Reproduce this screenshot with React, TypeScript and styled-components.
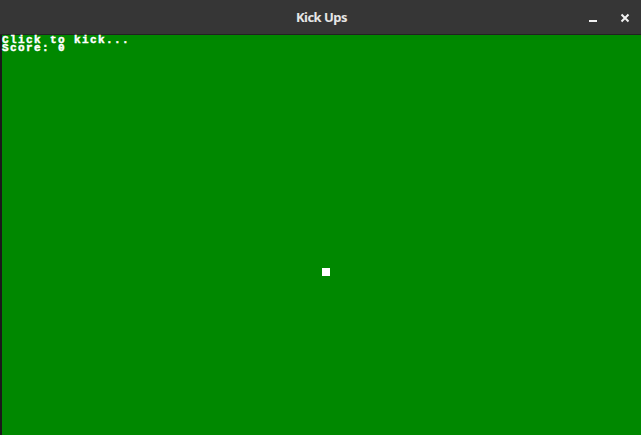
import React from "react";
import styled, { createGlobalStyle } from "styled-components";

const Global = createGlobalStyle`
  html, body { margin: 0; padding: 0; background: #008800; overflow: hidden; }
  #root { width: 641px; height: 435px; }
`;

const Window = styled.div`
  width: 641px;
  height: 435px;
  display: flex;
  flex-direction: column;
`;

const TitleBar = styled.div`
  height: 35px;
  background: #363636;
  border-bottom: 1px solid #222;
  box-sizing: border-box;
  display: flex;
  align-items: center;
  justify-content: center;
  position: relative;
`;

const Title = styled.div`
  font-family: "Noto Sans", "Open Sans", sans-serif;
  font-weight: 700;
  font-size: 13px;
  color: #e6e6e6;
  letter-spacing: -0.5px;
  margin-left: 2px;
`;

const Controls = styled.div`
  position: absolute;
  right: 0;
  top: 0;
  height: 35px;
  display: flex;
  align-items: center;
`;

const CtrlButton = styled.div`
  width: 32px;
  height: 35px;
  display: flex;
  align-items: center;
  justify-content: center;
`;

const Canvas = styled.div`
  flex: 1;
  background: #008800;
  border-left: 2px solid #1a1a1a;
  position: relative;
`;

const Hud = styled.pre`
  margin: 0;
  padding: 1px 0 0 0;
  font-family: "Liberation Mono", "DejaVu Sans Mono", monospace;
  font-weight: 700;
  font-size: 11px;
  letter-spacing: 1.4px;
  line-height: 8px;
  color: #ffffff;
  -webkit-text-stroke: 0.45px #ffffff;
`;

const Ball = styled.div`
  position: absolute;
  left: 320px;
  top: 233px;
  width: 8px;
  height: 8px;
  background: #ffffff;
`;

export default function App() {
  return (
    <>
      <Global />
      <Window>
        <TitleBar>
          <Title>Kick Ups</Title>
          <Controls>
            <CtrlButton>
              <svg width="10" height="10" viewBox="0 0 10 10">
                <rect x="1" y="7" width="8" height="2" fill="#f2f2f2" />
              </svg>
            </CtrlButton>
            <CtrlButton>
              <svg width="10" height="10" viewBox="0 0 10 10">
                <path d="M1.5 1.5 L8.5 8.5 M8.5 1.5 L1.5 8.5" stroke="#f2f2f2" strokeWidth="2" />
              </svg>
            </CtrlButton>
          </Controls>
        </TitleBar>
        <Canvas>
          <Hud>{"Click to kick...\nScore: 0"}</Hud>
          <Ball />
        </Canvas>
      </Window>
    </>
  );
}
